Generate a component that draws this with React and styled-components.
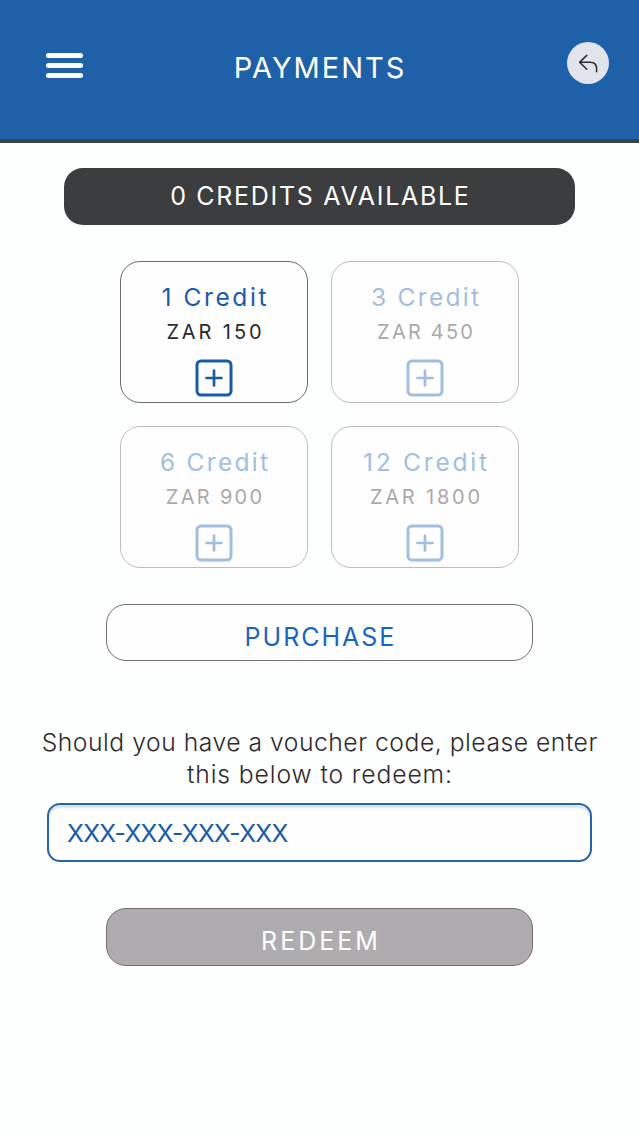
import React from "react";
import styled, { createGlobalStyle } from "styled-components";

const GlobalStyle = createGlobalStyle`
  * { box-sizing: border-box; }
  body { margin: 0; background: #fdfefe; }
  button, input { font: inherit; margin: 0; }
`;

const Screen = styled.div`
  display: flex;
  flex-direction: column;
  align-items: center;
  width: 639px;
  height: 1136px;
  overflow: hidden;
  font-family: Inter, "Liberation Sans", sans-serif;
  color: #2d2a2e;
`;

const Header = styled.header`
  display: grid;
  grid-template-columns: 42px 1fr 42px;
  align-items: start;
  width: 100%;
  height: 143px;
  padding: 42px 30px 0 46px;
  background: #1f61a8;
  border-bottom: 4px solid #3b4043;
`;

const MenuButton = styled.button`
  display: flex;
  flex-direction: column;
  gap: 5px;
  width: 37px;
  margin-top: 11px;
  padding: 0;
  border: 0;
  background: none;
`;

const MenuBar = styled.span`
  height: 5px;
  border-radius: 2.5px;
  background: #fff;
`;

const Text = styled.span`
  display: block;
  white-space: nowrap;
  font-size: ${(p) => p.$size}px;
  font-weight: ${(p) => p.$weight || 400};
  line-height: ${(p) => p.$line || 32}px;
  letter-spacing: ${(p) => p.$track || 0}px;
  margin-right: ${(p) => -(p.$track || 0)}px;
`;

const Title = styled.h1`
  display: flex;
  justify-content: center;
  margin: 10px 0 0;
  padding-right: 17px;
  color: #fff;
`;

const BackButton = styled.button`
  display: grid;
  place-items: center;
  width: 42px;
  height: 42px;
  padding: 0;
  border: 0;
  border-radius: 50%;
  background: #e2e4ec;
`;

const Balance = styled.div`
  display: flex;
  justify-content: center;
  width: 511px;
  height: 57px;
  margin-top: 25px;
  padding-top: 12px;
  border-radius: 19px;
  background: #3c3d3f;
  color: #fff;
`;

const Bundles = styled.section`
  display: grid;
  grid-template-columns: 188px 188px;
  gap: 23px;
  margin-top: 36px;
`;

const Card = styled.article`
  display: flex;
  flex-direction: column;
  align-items: center;
  height: 142px;
  padding-top: 19px;
  border: 1.5px solid ${(p) => (p.$active ? "#6b696a" : "#bfbcc1")};
  border-radius: 20px;
  background: #fefefe;
`;

const CardName = styled.div`
  color: ${(p) => (p.$active ? "#195ba8" : "#a2bede")};
`;

const CardPrice = styled.div`
  margin-top: 4px;
  color: ${(p) => (p.$active ? "#2b292b" : "#aaa8aa")};
`;

const AddButton = styled.button`
  display: flex;
  margin-top: 12px;
  padding: 0;
  border: 0;
  background: none;
  color: ${(p) => (p.$active ? "#195ba8" : "#a2bede")};
`;

const Action = styled.button`
  display: flex;
  justify-content: center;
  width: 427px;
  height: ${(p) => p.$height}px;
  margin-top: ${(p) => p.$top}px;
  padding: 16px 0 0;
  border: 1.5px solid #757071;
  border-radius: 20px;
  background: ${(p) => (p.$disabled ? "#aeacae" : "#fefefe")};
  color: ${(p) => (p.$disabled ? "#fff" : "#1766c2")};
`;

const Prompt = styled.div`
  display: flex;
  flex-direction: column;
  align-items: center;
  margin-top: 65px;
`;

const CodeField = styled.input`
  width: 545px;
  height: 59px;
  margin-top: 13px;
  padding: 1px 18px 0;
  border: 2px solid #2765a8;
  border-radius: 13px;
  outline: 0;
  background: #fefefe;
  box-shadow: inset 0 3px 2px #dbe1f2;
  font-size: 24.7px;
  letter-spacing: -0.7px;
  color: #195ba8;
  &::placeholder { color: #195ba8; opacity: 1; }
`;

const bundles = [
  { name: "1 Credit", price: "ZAR 150", nameTrack: 2.6, priceTrack: 2.9, active: true },
  { name: "3 Credit", price: "ZAR 450", nameTrack: 2.3, priceTrack: 2.2 },
  { name: "6 Credit", price: "ZAR 900", nameTrack: 2.3, priceTrack: 2.3 },
  { name: "12 Credit", price: "ZAR 1800", nameTrack: 2.8, priceTrack: 2.8 },
];

const PlusBox = () => (
  <svg width="38" height="38" viewBox="0 0 38 38" fill="none" stroke="currentColor">
    <rect x="2" y="2" width="34" height="34" rx="4" strokeWidth="3" />
    <path d="M19 11.5v15M11.5 19h15" strokeWidth="2.7" strokeLinecap="round" />
  </svg>
);

export default function App() {
  return (
    <>
      <GlobalStyle />
      <Screen>
        <Header>
          <MenuButton aria-label="Menu">
            <MenuBar />
            <MenuBar />
            <MenuBar />
          </MenuButton>
          <Title><Text $size={29} $track={2}>PAYMENTS</Text></Title>
          <BackButton aria-label="Back">
            <svg width="42" height="42" viewBox="0 0 42 42" fill="none" stroke="#25282c" strokeWidth="1.5" strokeLinecap="round" strokeLinejoin="round">
              <path d="M19.8 13.4L12.6 20.2L19.8 27.2M13 20.2H23Q29.6 20.2 29.6 26.6V29.7" />
            </svg>
          </BackButton>
        </Header>
        <Balance><Text $size={25} $track={1.7}>0 CREDITS AVAILABLE</Text></Balance>
        <Bundles>
          {bundles.map((b) => (
            <Card key={b.name} $active={b.active}>
              <CardName $active={b.active}><Text $size={24.5} $track={b.nameTrack}>{b.name}</Text></CardName>
              <CardPrice $active={b.active}><Text $size={20} $line={30} $track={b.priceTrack}>{b.price}</Text></CardPrice>
              <AddButton $active={b.active} aria-label={`Add ${b.name}`}><PlusBox /></AddButton>
            </Card>
          ))}
        </Bundles>
        <Action $top={36} $height={57}><Text $size={25} $track={2}>PURCHASE</Text></Action>
        <Prompt>
          <Text $size={24.7} $weight={300} $track={0.52}>Should you have a voucher code, please enter</Text>
          <Text $size={24.7} $weight={300} $track={0.9}>this below to redeem:</Text>
        </Prompt>
        <CodeField placeholder="XXX-XXX-XXX-XXX" aria-label="Voucher code" />
        <Action $top={46} $height={58} $disabled><Text $size={25} $track={3}>REDEEM</Text></Action>
      </Screen>
    </>
  );
}
